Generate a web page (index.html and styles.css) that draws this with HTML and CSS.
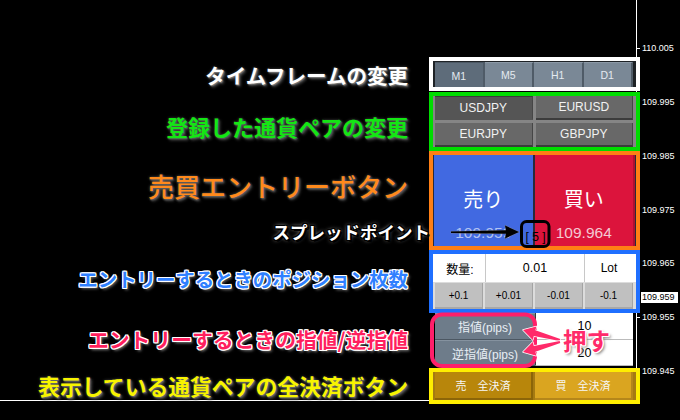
FILE: index.html
```html
<!DOCTYPE html>
<html lang="ja">
<head>
<meta charset="utf-8">
<title>MT4 パネル説明</title>
<link rel="stylesheet" href="styles.css">
</head>
<body>
<div class="screen">
  <div class="chart"></div>
  <div class="axis">
    <div class="tick">110.005</div>
    <div class="tick">109.995</div>
    <div class="tick">109.985</div>
    <div class="tick">109.975</div>
    <div class="tick">109.965</div>
    <div class="tick">109.955</div>
    <div class="tick">109.945</div>
    <div class="bid">109.959</div>
  </div>

  <div class="overlay">
    <div class="label r1 l-white">タイムフレームの変更</div>
    <div class="sec tf r1">
      <div class="tfbtn on">M1</div>
      <div class="tfbtn">M5</div>
      <div class="tfbtn">H1</div>
      <div class="tfbtn">D1</div>
    </div>

    <div class="label r3 l-green">登録した通貨ペアの変更</div>
    <div class="sec pairs r3">
      <div class="pbtn on">USDJPY</div>
      <div class="pbtn">EURUSD</div>
      <div class="pbtn">EURJPY</div>
      <div class="pbtn">GBPJPY</div>
    </div>

    <div class="label r4 top">
      <span class="l-orange">売買エントリーボタン</span>
      <span class="l-spread">スプレッドポイント</span>
    </div>
    <div class="sec trade r4">
      <div class="tbtn sell"><span class="big">売り</span><span class="price">109.959</span></div>
      <div class="tbtn buy"><span class="big">買い</span><span class="price">109.964</span></div>
      <div class="spread">[ 5 ]</div>
    </div>

    <div class="label r5 l-blue">エントリーするときのポジション枚数</div>
    <div class="sec lots r5">
      <div class="lotrow">
        <div class="cell">数量:</div>
        <div class="cell val">0.01</div>
        <div class="cell">Lot</div>
      </div>
      <div class="steprow">
        <div class="sbtn">+0.1</div>
        <div class="sbtn">+0.01</div>
        <div class="sbtn">-0.01</div>
        <div class="sbtn">-0.1</div>
      </div>
    </div>

    <div class="label r6 l-pink">エントリーするときの指値/逆指値</div>
    <div class="sec orders r6">
      <div class="obtn">指値(pips)</div>
      <div class="ocell">10</div>
      <div class="obtn">逆指値(pips)</div>
      <div class="ocell">20</div>
      <div class="push">押す</div>
    </div>

    <div class="label r7 l-yellow">表示している通貨ペアの全決済ボタン</div>
    <div class="sec close r7">
      <div class="cbtn csell">売　全決済</div>
      <div class="cbtn cbuy">買　全決済</div>
    </div>
  </div>

  <svg class="marks" width="680" height="420" viewBox="0 0 680 420" aria-hidden="true">
    <rect x="432" y="314.5" width="103" height="51.5" rx="10" ry="10" fill="none" stroke="#ff1f6a" stroke-width="4"/>
    <g class="pinkarrow">
      <polygon points="523,330 536.4,326.4 535.4,330.2 560.3,339 559.7,341 533.8,336 532.8,339.9"/>
      <polygon points="523,352 532.8,342.1 533.8,346 559.7,341 560.3,343 535.4,351.8 536.4,355.7"/>
    </g>
    <polygon class="blackarrow" points="519,232 505,225.5 506,230.3 451,231.4 451,233 506,233.7 505,238.5"/>
    <rect x="521.5" y="221.5" width="27.5" height="25" rx="5" ry="5" fill="none" stroke="#000" stroke-width="3"/>
  </svg>
</div>
</body>
</html>
```

FILE: styles.css
```css
* { box-sizing: border-box; margin: 0; padding: 0; }
html, body { width: 680px; height: 420px; overflow: hidden; background: #000; }
body { font-family: "Liberation Sans", "Noto Sans CJK JP", sans-serif; }

.screen {
  position: relative;
  width: 680px;
  height: 420px;
  display: grid;
  grid-template-columns: 637px 43px;
  align-items: start;
}
.chart {
  height: 401px;
  border-right: 1px solid #fff;
  border-bottom: 1px solid #fff;
}

/* price axis */
.axis {
  position: relative;
  height: 420px;
  padding-top: 43px;
  display: flex;
  flex-direction: column;
}
.tick {
  position: relative;
  height: 54.5px;
  padding-left: 5px;
  font-size: 9px;
  line-height: 10px;
  color: #fff;
}
.tick::before {
  content: "";
  position: absolute;
  left: -1px;
  top: 5px;
  width: 4px;
  height: 1px;
  background: #fff;
}
.bid {
  position: absolute;
  top: 292px;
  left: 4px;
  width: 37px;
  height: 11px;
  padding-left: 1px;
  background: #fff;
  color: #000;
  font-size: 9px;
  line-height: 11px;
}

/* overlay: labels + panel */
.overlay {
  position: absolute;
  left: 0;
  top: 57px;
  width: 640px;
  display: grid;
  grid-template-columns: 429px 211px;
  grid-template-rows: 34px 1px 59px 99px 63px 55px 36px;
}
.r1 { grid-row: 1; }
.r3 { grid-row: 3; }
.r4 { grid-row: 4; }
.r5 { grid-row: 5; }
.r6 { grid-row: 6; }
.r7 { grid-row: 7; }

.label {
  grid-column: 1;
  display: flex;
  flex-direction: column;
  align-items: flex-end;
  justify-content: center;
  padding-right: 21px;
  font-family: "Noto Sans CJK JP", sans-serif;
  font-weight: 700;
  line-height: 1;
  white-space: nowrap;
  position: relative;
  z-index: 3;
}
.label.top { justify-content: flex-start; padding-top: 22px; }

.l-white {
  font-size: 20.5px;
  color: #fff;
  padding-top: 3px;
  text-shadow: 1px 1px 1px #777, 2px 2px 3px #555, 0 0 3px #444;
}
.l-green {
  font-size: 22px;
  color: #14e614;
  padding-top: 8px;
  text-shadow: 1px 1px 1px #555, 2px 2px 3px #4a4a4a, 0 0 3px #444;
}
.l-orange {
  font-size: 26px;
  font-weight: 500;
  color: #ff8a1c;
  text-shadow: 1px 1px 2px #666, 2px 2px 3px #444, 0 0 3px #555;
}
.l-spread {
  font-size: 17.5px;
  color: #fff;
  margin-top: 24px;
  margin-right: -22px;
  text-shadow:
    1px 0 0 #000, -1px 0 0 #000, 0 1px 0 #000, 0 -1px 0 #000,
    1px 1px 0 #000, -1px -1px 0 #000, 1px -1px 0 #000, -1px 1px 0 #000,
    2px 2px 0 #000, 0 0 4px #ddd;
}
.l-blue {
  font-size: 19.4px;
  color: #2f80ff;
  padding-bottom: 6px;
  text-shadow:
    1px 0 0 #fff, -1px 0 0 #fff, 0 1px 0 #fff, 0 -1px 0 #fff,
    1px 1px 0 #fff, -1px -1px 0 #fff, 1px -1px 0 #fff, -1px 1px 0 #fff,
    2px 2px 3px #777;
}
.l-pink {
  font-size: 20.8px;
  color: #ff1f5e;
  padding-bottom: 2px;
  text-shadow:
    1px 0 0 #fff, -1px 0 0 #fff, 0 1px 0 #fff, 0 -1px 0 #fff,
    1px 1px 0 #fff, -1px -1px 0 #fff, 1px -1px 0 #fff, -1px 1px 0 #fff,
    2px 2px 3px #888;
}
.l-yellow {
  font-size: 21.8px;
  color: #f8f400;
  text-shadow: 1px 1px 1px #666, 2px 2px 3px #555, 0 0 3px #444;
}

/* panel sections */
.sec { grid-column: 2; position: relative; }

.tf {
  display: flex;
  border: 4px solid #fff;
  padding: 1px 3px 0 2px;
  background: #1e2226;
}
.tfbtn {
  flex: 1;
  display: flex;
  align-items: center;
  justify-content: center;
  background: #7a8896;
  border-right: 2px solid #4f5b67;
  border-top: 1px solid #8c99a6;
  color: #e4eaf0;
  font-size: 10.5px;
}
.tfbtn.on {
  background: #5e6c7a;
  border-top: 1px solid #4c5864;
  padding-top: 2px;
}

.pairs {
  display: grid;
  grid-template-columns: 1fr 1fr;
  grid-template-rows: 24px 24px;
  gap: 3px;
  border: 4px solid #00dd00;
  padding: 0 3px 0 2px;
  background: #858585;
}
.pbtn {
  display: flex;
  align-items: center;
  justify-content: center;
  background: #686868;
  border-bottom: 2px solid #3c3c3c;
  border-right: 1px solid #464646;
  color: #f2f2f2;
  font-size: 12px;
}
.pbtn.on { background: #555; border-bottom-color: #555; border-top: 1px solid #3a3a3a; }

.trade {
  display: flex;
  gap: 2px;
  border: 4px solid #ff7f15;
  padding: 0 1px 0 1px;
  background: #2a2a3a;
}
.tbtn {
  flex: 1;
  display: flex;
  flex-direction: column;
  align-items: center;
  padding-top: 34px;
}
.sell { background: #4169e1; }
.buy { background: #dc143c; border-right: 2px solid #b01030; }
.big {
  font-family: "Noto Sans CJK JP", sans-serif;
  font-size: 20px;
  line-height: 20px;
  color: #fff;
}
.price {
  margin-top: 16px;
  font-size: 15.5px;
  line-height: 16px;
}
.sell .price { color: #b3c3f2; }
.buy .price { color: #f4c9d2; }
.spread {
  position: absolute;
  left: 50%;
  margin-left: -10px;
  top: 74px;
  width: 22px;
  text-align: center;
  font-size: 12px;
  line-height: 16px;
  color: #000;
  white-space: pre;
}

.lots {
  border: 4px solid #1f6fff;
  background: #fff;
}
.lotrow {
  height: 28px;
  display: grid;
  grid-template-columns: 50px 98px 48px;
  gap: 1px;
  margin: 0 3px 0 2px;
  background: #c8c8c8;
}
.cell {
  display: flex;
  align-items: center;
  justify-content: center;
  background: #fff;
  color: #000;
  font-size: 12px;
}
.cell.val { font-size: 12.5px; }
.steprow {
  height: 27px;
  display: grid;
  grid-template-columns: repeat(4, 1fr);
  gap: 2px;
  padding: 1px 3px 0 2px;
  background: #dcdcdc;
}
.sbtn {
  display: flex;
  align-items: center;
  justify-content: center;
  background: #c0c0c0;
  border-right: 1px solid #a4a4a4;
  border-bottom: 2px solid #a8a8a8;
  color: #000;
  font-size: 10px;
}

.orders {
  display: grid;
  grid-template-columns: 100px 98px;
  grid-template-rows: 27px 26px;
  margin-left: 6px;
  height: 53px;
}
.obtn {
  display: flex;
  align-items: center;
  justify-content: center;
  background: #6e7c8a;
  border-bottom: 1px solid #4c5762;
  border-top: 1px solid #85929f;
  color: #e8eef4;
  font-size: 12px;
}
.ocell {
  display: flex;
  align-items: center;
  justify-content: center;
  background: #fff;
  border-left: 1px solid #3a3a3a;
  border-bottom: 1px solid #bbb;
  color: #000;
  font-size: 12.5px;
}
.push {
  position: absolute;
  left: 128px;
  top: 15px;
  z-index: 5;
  font-family: "Noto Sans CJK JP", sans-serif;
  font-weight: 700;
  font-size: 23.5px;
  line-height: 24px;
  color: #ff2a6a;
  text-shadow:
    1px 0 0 #fff, -1px 0 0 #fff, 0 1px 0 #fff, 0 -1px 0 #fff,
    1px 1px 0 #fff, -1px -1px 0 #fff, 1px -1px 0 #fff, -1px 1px 0 #fff,
    2px 2px 3px #777;
}

.close {
  display: grid;
  grid-template-columns: 1fr 1fr;
  gap: 2px;
  border: 4px solid #ffee00;
  padding: 0 3px 0 2px;
  background: #a57a12;
}
.cbtn {
  display: flex;
  align-items: center;
  justify-content: center;
  color: #f6f6f6;
  font-size: 11px;
  border-right: 2px solid #8c6508;
  border-bottom: 2px solid #8c6508;
}
.csell { background: #b8860b; }
.cbuy { background: #daa520; border-color: #b5861a; }

/* annotation layer */
.marks {
  position: absolute;
  left: 0;
  top: 0;
  z-index: 4;
  pointer-events: none;
}
.pinkarrow polygon {
  fill: #ff2a6a;
  stroke: #fff;
  stroke-width: 1.5;
  stroke-linejoin: round;
  paint-order: stroke;
}
.blackarrow {
  fill: #000;
  stroke: #8a8a8a;
  stroke-width: 0.6;
  paint-order: stroke;
}
```
